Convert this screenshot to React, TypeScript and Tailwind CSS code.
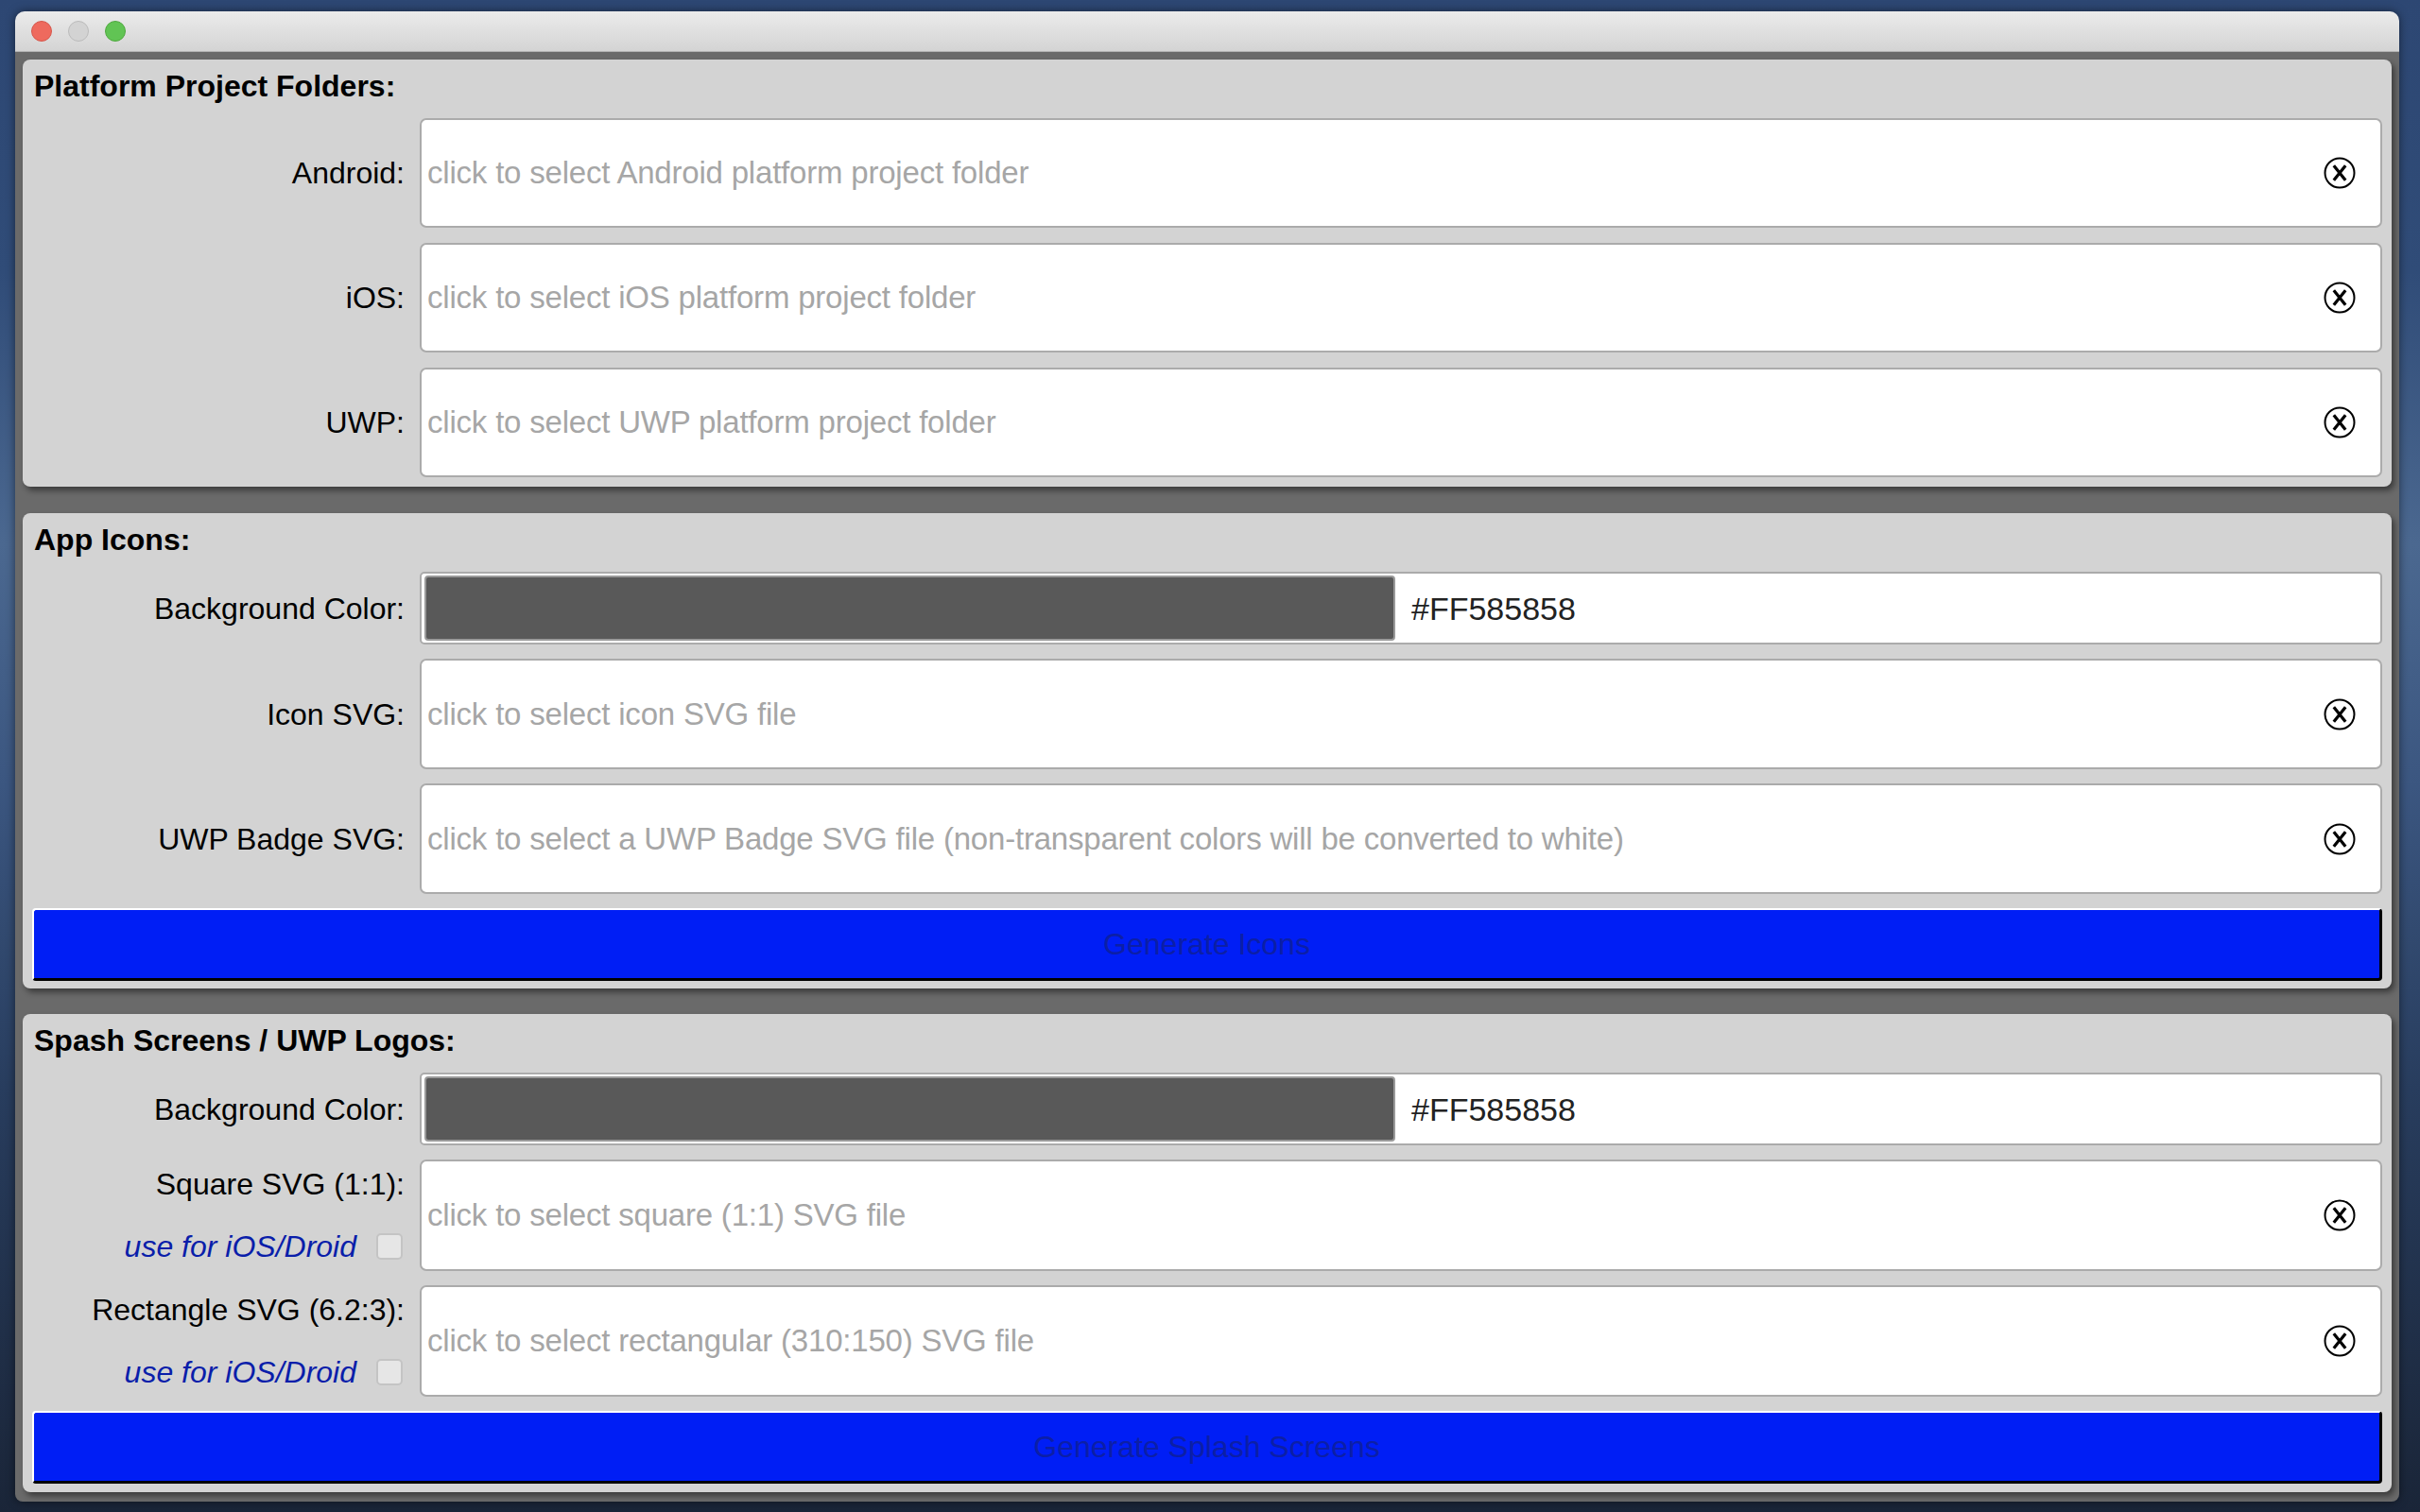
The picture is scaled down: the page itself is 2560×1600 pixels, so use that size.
import React from "react";

function CloseIcon() {
  return (
    <svg width="34" height="34" viewBox="0 0 34 34" className="block">
      <circle cx="17" cy="17" r="15.5" fill="none" stroke="#000" strokeWidth="2" />
      <path d="M10.8 9.2 L23.2 24.8 M23.2 9.2 L10.8 24.8" stroke="#000" strokeWidth="3.2" fill="none" />
    </svg>
  );
}

function Label({ children }: { children: React.ReactNode }) {
  return (
    <div className="flex items-center justify-end text-[32px] leading-[40px] text-black whitespace-nowrap">
      {children}
    </div>
  );
}

function FileField({ placeholder, h }: { placeholder: string; h: string }) {
  return (
    <div className={`flex items-center bg-white border-2 border-[#ababab] rounded-[7px] ${h}`}>
      <span className="flex-1 pl-[6px] text-[33px] leading-[40px] tracking-[-0.2px] text-[#a6a6a6] whitespace-nowrap">
        {placeholder}
      </span>
      <span className="mr-[26px]">
        <CloseIcon />
      </span>
    </div>
  );
}

function ColorField() {
  return (
    <div className="h-[77px] flex items-center bg-white border-2 border-[#ababab] rounded-[5px]">
      <div className="ml-[3px] w-[1027px] h-[69px] bg-[#595959] border-2 border-[#9a9a9a] rounded-[4px]" />
      <span className="ml-[17px] text-[34px] leading-[40px] text-[#222222]">#FF585858</span>
    </div>
  );
}

function Heading({ children }: { children: React.ReactNode }) {
  return (
    <div className="h-[40px] mb-[14px] flex items-center pl-[2px] text-[32px] font-bold text-black whitespace-nowrap">
      {children}
    </div>
  );
}

function GenButton({ children }: { children: React.ReactNode }) {
  return (
    <div className="col-span-2 h-[77px] flex items-center justify-center bg-[#001ef5] border-t-2 border-l-2 border-t-white border-l-white border-b-[3px] border-r-[3px] border-b-black border-r-black rounded-[4px] text-[32px] text-[#0c1fa6]">
      {children}
    </div>
  );
}

function CheckLabel({ children }: { children: React.ReactNode }) {
  return (
    <div className="flex flex-col items-end justify-center gap-[26px] whitespace-nowrap">
      <span className="h-[40px] text-[32px] leading-[40px] text-black">{children}</span>
      <div className="h-[40px] flex items-center gap-[21px] mr-[2px]">
        <span className="text-[32px] leading-[40px] italic text-[#0a1eaa]">use for iOS/Droid</span>
        <span className="w-[28px] h-[28px] rounded-[5px] bg-[#e6e6e6] border-2 border-[#c4c4c4]" />
      </div>
    </div>
  );
}

export default function App() {
  return (
    <div className="w-[2560px] h-[1600px] overflow-hidden font-['Liberation_Sans',Arial,sans-serif] bg-[linear-gradient(180deg,#2d4773_0%,#304c78_18%,#4b6890_36%,#3b5680_52%,#283d5e_72%,#1a2538_100%)] pt-[12px] pl-[16px]">
      <div className="w-[2522px] h-[1577px] rounded-t-[10px] rounded-b-[8px] overflow-hidden flex flex-col shadow-[0_0_10px_rgba(0,0,0,0.5)]">
        {/* Title bar */}
        <div className="h-[43px] shrink-0 flex items-center pl-[17px] gap-[17px] bg-[linear-gradient(180deg,#ebebeb_0%,#d4d4d4_100%)] border-b border-[#b3b3b3]">
          <span className="w-[22px] h-[22px] rounded-full bg-[#ee6a5e] border border-[#d6574c]" />
          <span className="w-[22px] h-[22px] rounded-full bg-[#d3d3d3] border border-[#bbbbbb]" />
          <span className="w-[22px] h-[22px] rounded-full bg-[#61c454] border border-[#4fa83f]" />
        </div>

        {/* Content */}
        <div className="flex-1 flex flex-col bg-[#6a6a6a] px-[8px] pt-[8px]">
          {/* Panel 1 */}
          <div className="h-[452px] shrink-0 bg-[#d3d3d3] rounded-[8px] px-[10px] pt-[8px] shadow-[3px_4px_6px_rgba(0,0,0,0.45)]">
            <Heading>Platform Project Folders:</Heading>
            <div className="grid grid-cols-[394px_1fr] gap-x-[16px] gap-y-[16px]">
              <Label>Android:</Label>
              <FileField h="h-[116px]" placeholder="click to select Android platform project folder" />
              <Label>iOS:</Label>
              <FileField h="h-[116px]" placeholder="click to select iOS platform project folder" />
              <Label>UWP:</Label>
              <FileField h="h-[116px]" placeholder="click to select UWP platform project folder" />
            </div>
          </div>

          {/* Panel 2 */}
          <div className="mt-[28px] h-[503px] shrink-0 bg-[#d3d3d3] rounded-[8px] px-[10px] pt-[8px] shadow-[3px_4px_6px_rgba(0,0,0,0.45)]">
            <Heading>App Icons:</Heading>
            <div className="grid grid-cols-[394px_1fr] gap-x-[16px] gap-y-[15px]">
              <Label>Background Color:</Label>
              <ColorField />
              <Label>Icon SVG:</Label>
              <FileField h="h-[117px]" placeholder="click to select icon SVG file" />
              <Label>UWP Badge SVG:</Label>
              <FileField
                h="h-[117px]"
                placeholder="click to select a UWP Badge SVG file (non-transparent colors will be converted to white)"
              />
              <GenButton>Generate Icons</GenButton>
            </div>
          </div>

          {/* Panel 3 */}
          <div className="mt-[27px] h-[506px] shrink-0 bg-[#d3d3d3] rounded-[8px] px-[10px] pt-[8px] shadow-[3px_4px_6px_rgba(0,0,0,0.45)]">
            <Heading>Spash Screens / UWP Logos:</Heading>
            <div className="grid grid-cols-[394px_1fr] gap-x-[16px] gap-y-[15px]">
              <Label>Background Color:</Label>
              <ColorField />
              <CheckLabel>Square SVG (1:1):</CheckLabel>
              <FileField h="h-[118px]" placeholder="click to select square (1:1) SVG file" />
              <CheckLabel>Rectangle SVG (6.2:3):</CheckLabel>
              <FileField h="h-[118px]" placeholder="click to select rectangular (310:150) SVG file" />
              <GenButton>Generate Splash Screens</GenButton>
            </div>
          </div>
        </div>
      </div>
    </div>
  );
}
